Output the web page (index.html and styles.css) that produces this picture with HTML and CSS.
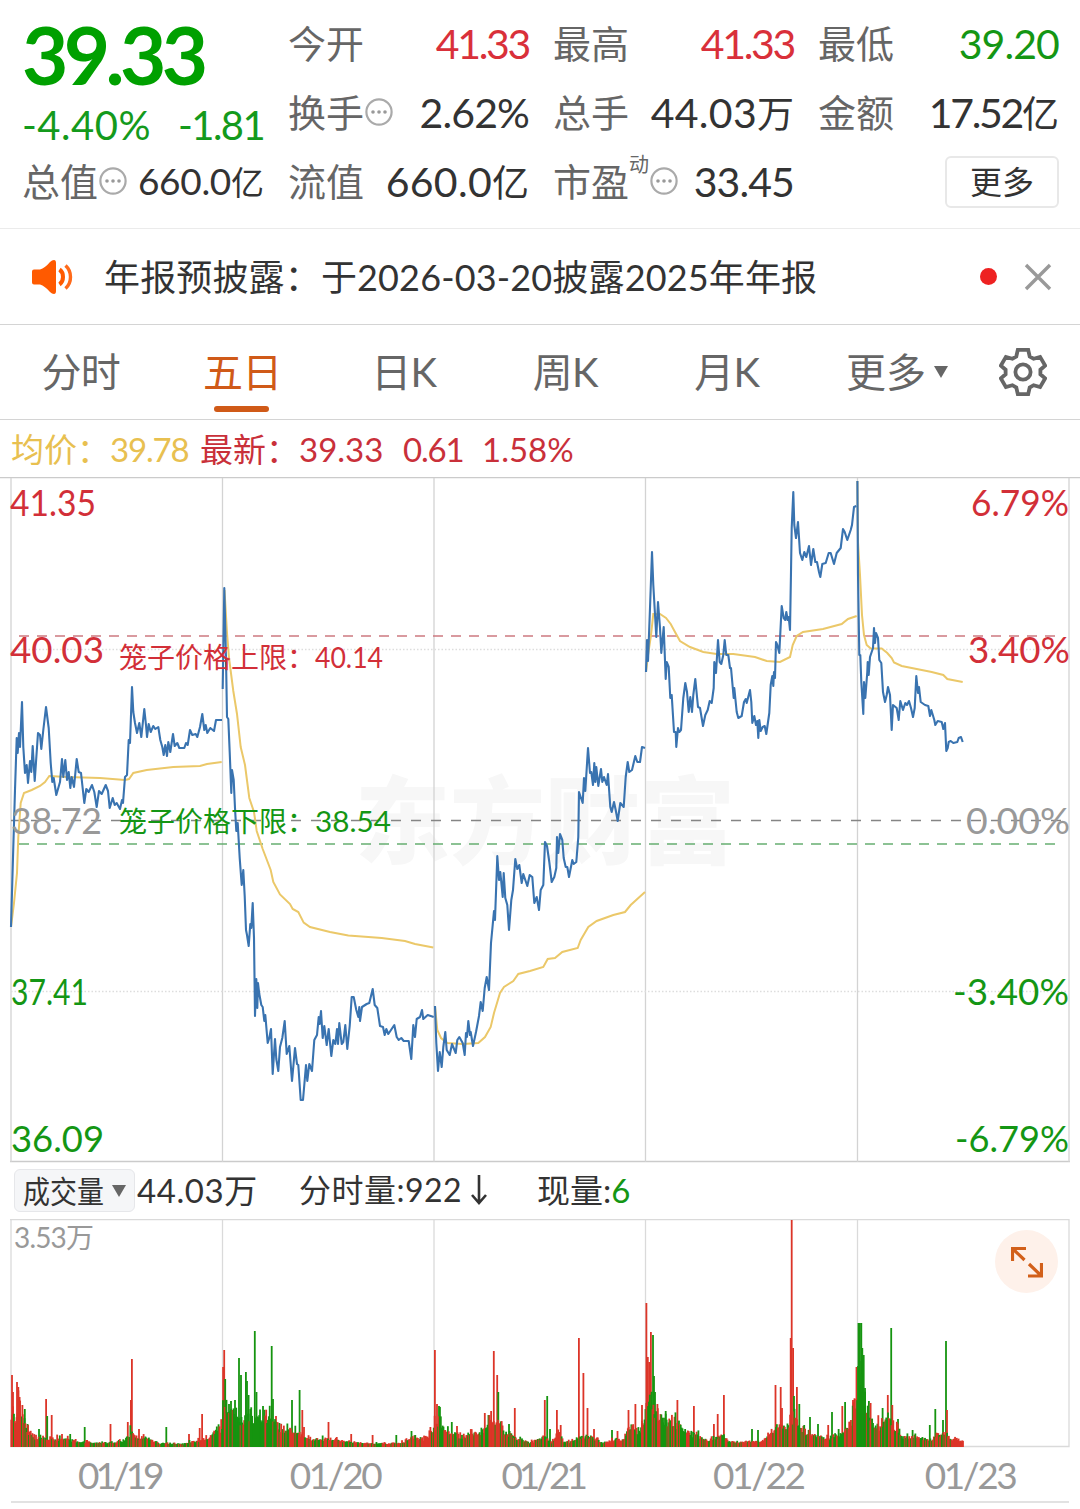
FILE: index.html
```html
<!DOCTYPE html>
<html lang="zh-CN">
<head>
    <meta charset="UTF-8">
    <meta name="viewport" content="width=device-width, initial-scale=1.0">
    <title>五日行情</title>
    <link rel="stylesheet" href="styles.css">
</head>
<body>
    <svg class="defs" width="0" height="0">
        <symbol id="more-dots" viewBox="0 0 28 28">
            <circle cx="14" cy="14" r="12.6" fill="none" stroke="#aaa" stroke-width="2.2"/>
            <circle cx="8" cy="14" r="1.8" fill="#999"/>
            <circle cx="14" cy="14" r="1.8" fill="#999"/>
            <circle cx="20" cy="14" r="1.8" fill="#999"/>
        </symbol>
    </svg>

    <header class="quote">
        <div class="main-price">
            <div class="price">39.33</div>
            <div class="change"><span class="percent">-4.40%</span><span class="points">-1.81</span></div>
            <div class="cell small"><span class="label">总值<svg class="dots"><use href="#more-dots"/></svg></span><span class="value">660.0<i>亿</i></span></div>
        </div>
        <div class="stats">
            <div class="cell"><span class="label">今开</span><span class="value tight up">41.33</span></div>
            <div class="cell"><span class="label">最高</span><span class="value tight up">41.33</span></div>
            <div class="cell"><span class="label">最低</span><span class="value down">39.20</span></div>
            <div class="cell"><span class="label">换手<svg class="dots"><use href="#more-dots"/></svg></span><span class="value">2.62%</span></div>
            <div class="cell"><span class="label">总手</span><span class="value loose">44.03<i>万</i></span></div>
            <div class="cell"><span class="label">金额</span><span class="value tight">17.52<i>亿</i></span></div>
            <div class="cell"><span class="label">流值</span><span class="value loose">660.0<i>亿</i></span></div>
            <div class="cell"><span class="label">市盈<sup>动</sup><svg class="dots"><use href="#more-dots"/></svg></span><span class="value">33.45</span></div>
            <div class="cell end"><button class="more" type="button">更多</button></div>
        </div>
    </header>

    <div class="notice">
        <svg class="speaker" viewBox="0 0 42 36">
            <path d="M1 12.5Q1 10.5 3 10.5H9Q14 9 19 3Q21 1 23 1Q25 1 25 4V32Q25 35 23 35Q21 35 19 33Q14 27 9 25.500H3Q1 25.500 1 23.500Z" fill="#ff5a00"/>
            <path d="M28.500 10.500Q32 13 32 18Q32 23 28.500 25.500" fill="none" stroke="#ff5a00" stroke-width="4"/>
            <path d="M34.500 6.500Q39.500 11 39.500 18Q39.500 25 34.500 29.500" fill="none" stroke="#ff6a1a" stroke-width="3.400"/>
        </svg>
        <span class="notice-text">年报预披露：于2026-03-20披露2025年年报</span>
        <span class="red-dot"></span>
        <svg class="close" viewBox="0 0 28 28"><path d="M2 2L26 26M26 2L2 26" stroke="#999" stroke-width="3.400"/></svg>
    </div>

    <nav class="tabs">
        <a class="tab">分时</a>
        <a class="tab active">五日</a>
        <a class="tab">日K</a>
        <a class="tab">周K</a>
        <a class="tab">月K</a>
        <a class="tab wide">更多<b class="caret"></b></a>
        <svg class="gear" viewBox="0 0 48 48" fill="none" stroke="#666" stroke-width="3.800">
            <path d="M18.800 1.900H29.200L30.700 8.500L34.600 10.800L41.100 8.900L46.100 17.600L41.400 21.700V26.300L46.100 30.400L41.100 39.100L34.600 37.200L30.700 39.500L29.200 46.100H18.800L17.300 39.500L13.400 37.200L6.900 39.100L1.900 30.400L6.600 26.300V21.700L1.900 17.600L6.900 8.900L13.400 10.800L17.300 8.500Z"/>
            <circle cx="24" cy="24" r="7.600"/>
        </svg>
    </nav>

    <div class="legend">
        <span class="avg">均价：<span class="num">39.78</span></span>
        <span class="last">最新：39.33</span>
        <span class="diff num">0.61</span>
        <span>1.58%</span>
    </div>

    <svg class="chart" viewBox="0 477 1080 686" width="1080" height="686">
        <text class="watermark" x="355" y="857" textLength="380">东方财富</text>
        <g class="grid">
            <path d="M0 477.500H1080M10 1161.500H1070" class="frame"/>
            <path d="M11 478V1162M222.500 478V1162M434 478V1162M645.500 478V1162M857.500 478V1162M1069 478V1162"/>
            <path d="M11 649.500H1069M11 991.500H1069" class="dotted"/>
        </g>
        <path class="cage up-line" d="M19 636H1056"/>
        <path class="cage zero-line" d="M11 820.500H1069"/>
        <path class="cage down-line" d="M19 844H1056"/>
        <g id="lines"></g>
        <g class="cage-text">
            <text x="119" y="668" class="up">笼子价格上限：</text>
            <text x="315" y="668" class="up" textLength="68" lengthAdjust="spacingAndGlyphs">40.14</text>
            <text x="119" y="832" class="down">笼子价格下限：</text>
            <text x="315" y="832" class="down" textLength="76" lengthAdjust="spacingAndGlyphs">38.54</text>
        </g>
        <g class="axis">
            <text x="10" y="516" class="up" textLength="86" lengthAdjust="spacingAndGlyphs">41.35</text>
            <text x="10" y="663" class="up" textLength="94" lengthAdjust="spacingAndGlyphs">40.03</text>
            <text x="11" y="834" class="flat" textLength="91" lengthAdjust="spacingAndGlyphs">38.72</text>
            <text x="11" y="1005" class="down" textLength="77" lengthAdjust="spacingAndGlyphs">37.41</text>
            <text x="11" y="1152" class="down" textLength="93" lengthAdjust="spacingAndGlyphs">36.09</text>
            <text x="971" y="516" class="up" textLength="98" lengthAdjust="spacingAndGlyphs">6.79%</text>
            <text x="968" y="663" class="up" textLength="102" lengthAdjust="spacingAndGlyphs">3.40%</text>
            <text x="966" y="834" class="flat" textLength="104" lengthAdjust="spacingAndGlyphs">0.00%</text>
            <text x="953" y="1005" class="down" textLength="116" lengthAdjust="spacingAndGlyphs">-3.40%</text>
            <text x="955" y="1152" class="down" textLength="114" lengthAdjust="spacingAndGlyphs">-6.79%</text>
        </g>
    </svg>

    <div class="volume-bar">
        <button class="picker" type="button"><span>成交量</span><b class="caret"></b></button>
        <span class="total">44.03万</span>
        <span class="minute">分时量:922<svg viewBox="0 0 18 32"><path d="M9 1V29M2 21L9 29L16 21" fill="none" stroke="#333" stroke-width="2.600"/></svg></span>
        <span>现量:<em class="down">6</em></span>
    </div>

    <div class="volume">
        <svg viewBox="0 1219 1080 229" width="1080" height="229">
            <path class="vol-grid" d="M10 1219.500H1069V1446.500H11V1219M222.500 1219V1447M434 1219V1447M645.500 1219V1447M857.500 1219V1447"/>
            <g id="bars"></g>
            <text x="14" y="1248" class="max" textLength="80">3.53万</text>
        </svg>
        <button class="expand" type="button">
            <svg viewBox="0 0 32 32" fill="none" stroke="#d2601a" stroke-width="3.200">
                <path d="M1.500 15V2.500H15M2 3L13.500 14"/>
                <path d="M30.500 17V30H17M30 29.500L18 18"/>
            </svg>
        </button>
    </div>

    <div class="dates">
        <span class="ones">01/19</span><span>01/20</span><span class="ones">01/21</span><span>01/22</span><span>01/23</span>
    </div>

    <script src="chart.js"></script>
</body>
</html>
```

FILE: styles.css
```css
body {
    margin: 0;
    width: 1080px;
    height: 1509px;
    overflow: hidden;
    background-color: #fff;
    color: #333;
    font-family: 'Lato', 'Noto Sans CJK SC', sans-serif;
}
button {
    font-family: inherit;
    color: inherit;
    padding: 0;
}
.defs {
    display: block;
}
.up { color: #d9303a; fill: #d22f38; }
.down { color: #149614; fill: #149614; }
.flat { fill: #999; }

/* quote header */
.quote {
    display: flex;
    box-sizing: border-box;
    height: 229px;
    padding: 9px 23px 0 22px;
    gap: 24px;
    border-bottom: 1px solid #ebebeb;
}
.main-price {
    width: 242px;
    flex: none;
}
.price {
    height: 92px;
    line-height: 90px;
    font-size: 80px;
    font-weight: bold;
    letter-spacing: -4.6px;
    color: #00a000;
}
.change {
    display: flex;
    justify-content: space-between;
    height: 46px;
    line-height: 48px;
    font-size: 40px;
    color: #149a1c;
}
.change .percent {
    letter-spacing: 0.5px;
}
.change .points {
    letter-spacing: -1.6px;
}
.stats {
    display: grid;
    grid-template-columns: repeat(3, 241px);
    grid-auto-rows: 69px;
    column-gap: 24px;
}
.cell {
    display: flex;
    justify-content: space-between;
    align-items: center;
    height: 69px;
    line-height: 69px;
    white-space: nowrap;
}
.label {
    display: flex;
    align-items: center;
    font-size: 38px;
    color: #666;
}
.label sup {
    align-self: flex-start;
    font-size: 20px;
    line-height: 35px;
}
.dots {
    width: 28px;
    height: 28px;
    margin: -2px 0 0 1px;
}
.value {
    font-size: 41px;
    letter-spacing: -0.9px;
}
.value.tight {
    letter-spacing: -2.3px;
}
.value.loose {
    letter-spacing: 0.3px;
}
.value i {
    font-style: normal;
    font-size: 37px;
    letter-spacing: 0;
}
.small .value {
    font-size: 37px;
    letter-spacing: -0.3px;
}
.small .value i {
    font-size: 33px;
}
.cell.end {
    justify-content: flex-end;
}
.more {
    width: 114px;
    height: 52px;
    line-height: 46px;
    font-size: 32px;
    background-color: #fff;
    border: 2px solid #e8e8e8;
    border-radius: 6px;
}

/* announcement */
.notice {
    display: flex;
    align-items: center;
    box-sizing: border-box;
    height: 96px;
    padding: 0 28px 0 31px;
    border-bottom: 1px solid #d4d4d4;
}
.speaker {
    width: 42px;
    height: 36px;
}
.notice-text {
    flex: 1;
    margin: -3px 0 0 31px;
    font-size: 36px;
    letter-spacing: 0.15px;
}
.red-dot {
    width: 17px;
    height: 17px;
    border-radius: 50%;
    background-color: #ee2222;
    margin-right: 27px;
}
.close {
    width: 28px;
    height: 28px;
}

/* period tabs */
.tabs {
    display: flex;
    align-items: center;
    box-sizing: border-box;
    height: 95px;
    border-bottom: 1px solid #d4d4d4;
    font-size: 40px;
    color: #666;
}
.tab {
    position: relative;
    width: 161.5px;
    line-height: 94px;
    text-align: center;
    letter-spacing: -0.8px;
}
.tab.wide {
    display: flex;
    align-items: center;
    justify-content: center;
    gap: 8px;
    width: 179px;
    letter-spacing: 0;
}
.tab.active {
    color: #d05a18;
}
.tab.active::after {
    content: "";
    position: absolute;
    left: 52px;
    bottom: 7px;
    width: 55px;
    height: 6px;
    border-radius: 3px;
    background-color: #d05a18;
}
.caret {
    border: 7px solid transparent;
    border-top: 12px solid #666;
    border-bottom: 0;
}
.gear {
    width: 48px;
    height: 48px;
    margin-left: 12px;
}

/* line above the chart */
.legend {
    display: flex;
    height: 57px;
    line-height: 59px;
    padding-left: 11px;
    font-size: 33px;
    color: #c9303a;
}
.legend .avg { width: 189px; color: #e8c050; }
.legend .last { width: 203px; }
.legend .diff { width: 79px; }
.legend .num { letter-spacing: -1.2px; }

/* price chart */
.chart {
    display: block;
}
.grid path {
    fill: none;
    stroke: #d3d3d3;
    stroke-width: 1.3;
}
.grid .frame {
    stroke: #cbcbcb;
}
.grid .dotted {
    stroke: #ddd;
    stroke-dasharray: 1.5 2;
}
.watermark {
    font-size: 95px;
    font-weight: 900;
    fill: #f7f7f7;
}
.cage {
    stroke-width: 1.6;
    stroke-dasharray: 10 8;
}
.up-line { stroke: #cd7a80; }
.down-line { stroke: #67ae72; }
.zero-line { stroke: #858585; stroke-dasharray: 10 10; }
.price-line {
    fill: none;
    stroke: #3973b0;
    stroke-width: 2.1;
    stroke-linejoin: round;
}
.avg-line {
    fill: none;
    stroke: #ebc869;
    stroke-width: 2;
}
.cage-text { font-size: 28px; }
.axis { font-size: 37px; }

/* volume */
.volume-bar {
    display: flex;
    align-items: center;
    height: 56px;
    padding: 0 0 0 14px;
    font-size: 33px;
    line-height: 52px;
    white-space: nowrap;
}
.volume-bar > span {
    margin-top: -3px;
}
.picker {
    display: flex;
    align-items: center;
    box-sizing: border-box;
    width: 121px;
    height: 43px;
    margin-top: -1px;
    padding-left: 8px;
    background-color: #f5f6f8;
    border: 1px solid #e6e7ea;
    border-radius: 6px;
}
.picker span {
    width: 89px;
    font-size: 31px;
    line-height: 38px;
    text-align: left;
    transform: scaleX(0.87);
    transform-origin: left;
}
.picker .caret {
    flex: none;
}
.total {
    width: 162px;
    margin-left: 2px;
    letter-spacing: 0.6px;
}
.minute {
    display: flex;
    align-items: center;
    width: 238px;
    font-size: 32px;
    letter-spacing: 0.5px;
}
.minute svg {
    width: 18px;
    height: 32px;
    margin-left: 8px;
}
.volume-bar em {
    font-style: normal;
}
.volume {
    position: relative;
    height: 229px;
}
.vol-grid {
    fill: none;
    stroke: #dadada;
    stroke-width: 1.3;
}
.max {
    font-size: 28px;
    fill: #999;
}
.expand {
    position: absolute;
    top: 11px;
    right: 22px;
    display: flex;
    align-items: center;
    justify-content: center;
    width: 63px;
    height: 63px;
    border: none;
    border-radius: 50%;
    background-color: #fef1ea;
}
.expand svg {
    width: 32px;
    height: 32px;
}
.dates {
    display: flex;
    box-sizing: border-box;
    height: 55px;
    margin: 0 11px;
    padding-left: 67px;
    line-height: 54px;
    border-bottom: 2px solid #e2e2e2;
    font-size: 37px;
    letter-spacing: -2.4px;
    color: #999;
}
.dates span {
    width: 211.7px;
    flex: none;
}
.dates .ones {
    letter-spacing: -4px;
}
.dates span:last-child {
    width: auto;
}
```

FILE: chart.js
```js
// one entry per trading day: x,y pairs
var prices = [
    "11,927 13.3,847 15,790 16.7,738 17.7,753 19,733 20,747 22,702 23.3,747 25,773 26.7,765 28,783 30,761 31.3,772 32.7,746 34.7,781 38,733 40,735 41.3,749 43.3,730 46,707 48.7,728 50.7,763 52.3,782 53.7,778 56.3,795 60,782 62,759 63.3,777 65.3,760 67,780 68.7,772 70.3,788 71.7,777 74,787 76.7,759 78.7,772 81,773 84.3,803 86.3,789 88.7,792 92,785 94.3,792 96.7,807 99,791 101.7,794 105.7,785 108,791 109.7,808 112.7,798 114.7,805 116.7,803 120,809 122,800 123,803 125,777 127,775 128.7,740 130,743 132,687 133.3,712 135,723 137,733 139.3,723 141.3,737 144.3,709 146,725 147,737 148.7,724 150.7,732 153.3,726 155.3,729 158.3,727 160.3,740 162.3,747 163.7,755 165.3,745 167,756 168.3,742 170.3,752 173,734 174.7,746 177.3,743 179.3,748 184.3,748 186,743 187.7,745 190,730 192.3,735 195.7,734 197.3,737 200,727 202.3,714 204.3,730 205.7,725 207.3,733 210.3,728 214,731 216,720 222,720",
    "222.7,689 224.3,588 226,658 227,717 228.3,719 229.7,752 231.3,793 232,770 233.7,780 235,808 236.3,831 237.7,823 239.7,858 241.7,885 243.3,870 244.7,896 246,930 247,935 248.7,946 250.3,924 251.3,928 252.7,903 254,938 255,1016 256.3,979 257.3,1008 258,983 259.3,994 261.3,1005 262.7,1007 264.3,1021 265.3,1015 267.7,1043 269.3,1038 271,1029 272.7,1074 275,1039 276.3,1059 278.3,1071 280,1047 282.3,1038 284.7,1021 286.7,1054 289.3,1046 292,1081 295,1048 297,1064 298.3,1065 300.7,1100 303,1100 306,1065 307.3,1081 309.3,1064 312,1071 314.3,1040 317,1035 318.7,1017 319.7,1024 321,1011 322.7,1038 324.3,1026 326.7,1045 328.7,1029 331.3,1056 333.3,1040 335.3,1044 337,1029 338,1044 339.3,1023 341.7,1044 343.3,1042 345.3,1025 347.3,1049 349.7,1026 351.7,997 353.7,997 356.3,1010 358.3,1017 359.3,1007 360,1021 362,1007 366.7,1004 369.3,1003 372.7,989 374.7,1005 377.3,1008 380,1026 383,1027 384.7,1035 386.3,1029 388.3,1034 394.3,1025 396.7,1037 398.7,1040 401.3,1038 403.7,1041 408.7,1041 411.3,1059 413.3,1025 415,1037 416.7,1019 420,1017 422,1010 423.3,1019 427.7,1015 433.7,1017",
    "435,1006 436.3,1043 438,1071 439.7,1052 441.7,1067 443.3,1047 445.3,1032 446.7,1050 449.7,1055 452,1044 455.7,1053 457.3,1040 459.3,1037 462.7,1043 464.7,1055 466,1033 467,1037 468.3,1021 470,1035 470.7,1032 473,1046 476,1032 479,1016 480.7,1002 482.7,1011 484.7,988 486.7,977 489,990 491,943 492.7,925 494,911 495,920 497.3,856 499,880 500.3,872 502.7,897 503.7,873 505.3,898 507.3,905 509,930 511.3,900 513,890 515.3,859 517.3,869 519.3,865 521.7,883 523.3,874 527.3,886 529.7,875 532.3,877 534.3,903 536.7,897 539,910 540.7,890 543.3,885 545,842 547,846 549.3,862 551.7,882 554.3,877 556.3,868 557,837 558.3,853 560,834 562.3,840 563.7,858 565.7,867 567.3,867 569,877 572.3,860 573.7,864 576.3,862 578.3,837 579,792 582.7,803 584,778 585.3,791 588,748 590,773 591.3,772 593,785 594.3,763 595.3,782 596.3,767 598.3,786 601,769 602.3,782 604,777 606.7,785 608,774 610.3,807 611.7,812 614,802 615.7,810 617.7,821 620.3,803 623.7,807 625.7,777 627.7,762 629.3,772 632,770 635.3,756 637.3,762 640,762 642,747 645,748",
    "646,672 647,640 648,661 650,608 652,552 653.3,585 656.3,637 658,602 660,628 661.3,653 663.7,627 665.7,679 666.7,662 668.7,667 670.3,698 671.7,695 674,732 675.7,732 676.3,747 678,728 679.3,732 681,730 683.3,698 685.3,683 687,692 688.7,712 690.3,697 692,712 693.3,695 695.3,679 698,707 700,708 703,726 705.3,715 707.7,710 709.7,701 711.7,703 713.7,688 714.3,662 716,673 718,640 719.7,662 721.3,664 723.3,655 724.7,640 726.3,655 728.3,655 730,668 731,668 733.7,698 734.3,688 736.7,712 738.3,718 741.7,716 744,702 745.7,699 746.7,703 750,690 751.3,702 752.3,723 754.3,716 756,725 757.3,721 758.3,738 759.3,720 760.7,731 762.7,727 764.7,726 766.3,734 769.3,713 770.7,685 772.3,676 773.3,686 774,672 775,678 776,642 777.3,645 779.3,653 781.7,606 783.7,618 785.3,620 786.3,612 787.7,620 788.7,617 790,630 791,572 791.7,528 793.3,492 794.3,525 796,538 798,522 800,553 802.3,560 804.3,552 806.3,557 809,546 811,565 813.3,549 815.3,562 817,562 819,572 820.3,577 822.3,564 825.7,563 828.7,553 830.7,553 834,564 836.7,553 840.7,548 843,529 844.7,532 847.3,540 850.7,530 852,525 854,507 856.3,506",
    "857.4,481 858,575 859.3,655 860.3,655 861.3,682 863.3,714 864,682 865.3,698 867.3,672 867.7,662 868.7,675 870,657 873,648 874,628 875,643 876,633 878,638 879.3,660 881.3,663 883,692 885,702 886.7,695 888,687 890,695 891.7,730 893,705 896.7,708 898.7,720 900.3,701 903,710 905.3,703 907,705 909,701 911,708 913,717 914.7,708 916.3,676 918,693 919,687 920.7,702 925,705 928.3,706 930,716 931.3,710 934.3,720 935.3,725 937.7,721 941.7,722 943.3,729 945,723 946.3,751 947.7,748 948.7,742 950.7,741 953.3,743 957.3,742 958.7,738 961,737 962.7,742"
];
var averages = [
    "11,927 14,903 17,873 18.3,837 20.7,803 24,793 31.7,790 40,786 45,782 49.3,776 66.7,777 100,778 125,780 129,779 133.3,773 146.7,770 173.3,767 200,766 207,764 221.7,762",
    "224.5,590 227,633 229,658 233.3,691 237,714 240.7,747 245,765 249.3,798 254,812 256.7,831 262.7,849 270.7,870 273.3,882 280,894.5 290,904 292.7,909 298.3,912 303.7,922.6 310,927 330,932 348.3,935.5 381.7,938 405,941 415,944 433.3,947.5",
    "435,1006 437.3,1030 441,1038 447.3,1043 463,1044 478.3,1043 485,1037 490.7,1027 494,1013 497.3,1002 500,993 504,987 513.3,981 518.3,974 530,971 543.3,967 547.7,959 555,958 562.3,952 577.7,948 580.7,940 588.3,927 596.7,921 613.3,915 625,912 630.7,905 645,892",
    "646,672 648,655 651,635 653.3,614 660,614 666,618 670.7,624 675,632 680,641 690,647 703.3,652 716.7,654 733.3,654 755,657 766.7,661 780,662 790,657 792.7,645 796.7,636 803,632 823,629 841.7,624 848,619 856.7,616",
    "857.4,481 858,542 860,575 862,615 864,635 866.7,645 870.7,648.5 881.7,648.5 887.3,653 891.7,658 894,662.5 901.7,666 916.7,669 931.7,672 943.3,675 947.3,679 962.7,682"
];

// usual volume level: [x, height]
var base = [
    [11,40],[15,35],[20,44],[25,32],[29,14],[35,11],[60,9],[70,8],[84,6],[110,5],[125,8],[131,17],[137,12],[150,9],[160,4],[185,4],[200,8],[208,12],[216,17],[222,22],
    [223,45],[228,42],[234,36],[245,34],[258,36],[270,33],[276,26],[284,20],[300,16],[306,10],[325,9],[345,7],[352,5],[400,4],[412,11],[425,10],[432,17],
    [435,25],[440,36],[443,20],[452,16],[462,11],[472,18],[480,14],[484,22],[490,34],[500,28],[504,18],[512,14],[518,10],[530,5],[545,12],[552,5],[558,18],[564,5],[576,8],[580,13],[590,14],[602,5],[615,8],[624,8],[628,25],[635,22],[640,16],[645,40],
    [646,60],[655,45],[660,30],[668,32],[678,28],[684,20],[690,16],[700,12],[708,7],[722,15],[728,7],[745,6],[765,7],[772,22],[785,24],[795,38],[800,22],[810,15],[825,9],[838,14],[845,20],[852,30],[857,60],
    [858,110],[862,80],[865,48],[870,34],[876,22],[885,32],[895,25],[903,12],[915,12],[930,8],[945,18],[950,10],[963,8]
];

// peaks: [x, height, colour]
var peaks = [
    [12,72,"r"],[13,55,"r"],[17,65,"r"],[18.3,60,"r"],[19.6,50,"r"],[22.4,42,"r"],[24.8,38,"g"],[27.5,23,"g"],[39,18,"g"],[46.1,48,"r"],[47.2,31,"g"],[51.7,32,"r"],[62,13,"r"],[70.2,13,"g"],[84.7,20,"g"],[110.5,23,"r"],[127.8,25,"r"],[130.9,47,"r"],[131.9,88,"r"],[139,18,"r"],[166.3,20,"g"],[189,13,"r"],[199.7,19,"r"],[202.1,33,"r"],
    [223.1,80,"r"],[224.2,97,"r"],[225.2,68,"g"],[229,43,"g"],[231,46,"g"],[235,47,"g"],[239,89,"g"],[241,72,"g"],[245.9,75,"g"],[247,66,"g"],[248.6,52,"g"],[254.8,116,"g"],[256.5,55,"g"],[263,41,"g"],[271.7,101,"g"],[273,48,"g"],[276,31,"r"],[292,47,"g"],[299.6,57,"g"],[302.3,37,"r"],[304,20,"r"],[328.5,25,"r"],[351.2,13,"r"],[372.6,12,"r"],[396.3,12,"g"],[411.5,16,"g"],[430.4,20,"r"],
    [434.9,97,"r"],[437,43,"r"],[439,41,"g"],[451.8,25,"g"],[457,21,"r"],[484.8,34,"r"],[493.8,96,"r"],[497.2,72,"r"],[498.3,55,"g"],[509,23,"g"],[514.8,39,"r"],[544.8,47,"r"],[547.2,51,"g"],[550,18,"g"],[556.9,37,"r"],[560.7,22,"r"],[578.9,109,"r"],[583.4,74,"r"],[587.5,39,"r"],[594,18,"r"],[612,17,"g"],[617.5,16,"r"],[628.5,37,"r"],[635.4,43,"r"],[642,42,"r"],
    [646.4,144,"r"],[647.8,90,"r"],[649.2,85,"r"],[650.9,115,"r"],[653,112,"g"],[654,71,"g"],[655,55,"g"],[657.4,43,"r"],[665.7,36,"g"],[677.4,47,"r"],[693.9,41,"r"],[713.9,23,"r"],[717.7,33,"r"],[723.9,52,"r"],[752,18,"g"],[758,17,"g"],[775.5,62,"r"],[780.7,60,"r"],[782,39,"r"],[790.7,109,"r"],[791.7,227,"r"],[793.1,99,"r"],[794,51,"g"],[796.9,60,"r"],[799.3,43,"g"],[810,30,"g"],[818,23,"g"],[828.2,22,"r"],[832,35,"g"],[842.3,41,"r"],[845.1,45,"g"],[853,47,"r"],
    [856.5,80,"r"],[858.5,124,"g"],[859.9,124,"g"],[861.3,124,"g"],[862.3,99,"g"],[863.7,92,"g"],[865,59,"g"],[868.9,46,"g"],[870.6,44,"r"],[882.6,39,"g"],[887.8,52,"r"],[891.2,119,"g"],[892.3,42,"r"],[898,28,"g"],[912.6,17,"g"],[929.8,22,"g"],[935.3,38,"g"],[943,27,"g"],[946,106,"g"],[947,37,"r"]
];

// share of green bars up to each x
var greenShare = [[24,0.15],[222,0.45],[276,0.85],[434,0.4],[470,0.55],[500,0.3],[645,0.4],[700,0.55],[790,0.4],[845,0.5],[857,0.1],[866,0.95],[945,0.6],[970,0.25]];

var colors = { r: "#dc3528", g: "#169410" };
var NS = "http://www.w3.org/2000/svg";

function add(parent, tag, attrs) {
    var el = document.createElementNS(NS, tag);
    for (var key in attrs) {
        el.setAttribute(key, attrs[key]);
    }
    parent.appendChild(el);
}

var lines = document.getElementById("lines");
averages.forEach(function (p) { add(lines, "polyline", { "class": "avg-line", points: p }); });
prices.forEach(function (p) { add(lines, "polyline", { "class": "price-line", points: p }); });

var seed = 19;
function rand() {
    seed = (seed * 16807) % 2147483647;
    return seed / 2147483647;
}

function level(x) {
    for (var i = 1; i < base.length; i++) {
        if (x <= base[i][0]) {
            var a = base[i - 1], b = base[i];
            return a[1] + (b[1] - a[1]) * (x - a[0]) / (b[0] - a[0]);
        }
    }
    return base[base.length - 1][1];
}

function green(x) {
    for (var i = 0; i < greenShare.length; i++) {
        if (x <= greenShare[i][0]) return rand() < greenShare[i][1];
    }
    return false;
}

var bars = document.getElementById("bars");
function bar(x, h, color) {
    add(bars, "rect", { x: (x - 0.9).toFixed(2), y: (1447 - h).toFixed(1), width: 1.8, height: h.toFixed(1), fill: colors[color] });
}

peaks.forEach(function (p) { bar(p[0], p[1], p[2]); });
for (var x = 11.3; x < 963.5; x += 0.882) {
    var h = level(x) * (0.6 + 0.6 * rand() * rand() + 0.25 * rand());
    bar(x, Math.max(h, 2.5), green(x) ? "g" : "r");
}
```
